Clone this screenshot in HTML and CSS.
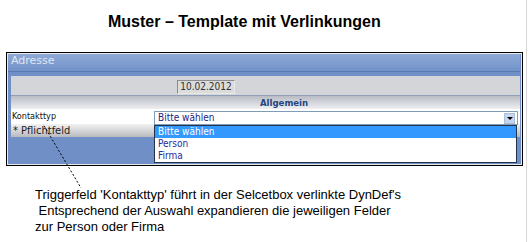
FILE: index.html
```html
<!DOCTYPE html>
<html lang="de">
<head>
<meta charset="utf-8">
<title>Muster – Template mit Verlinkungen</title>
<link rel="stylesheet" href="styles.css">
</head>
<body>
<div class="page">
  <h1 class="title">Muster – Template mit Verlinkungen</h1>
  <div class="panel">
    <div class="panel-inner">
      <div class="panel-head">Adresse</div>
      <div class="rows">
        <div class="row-date"><span class="datebox">10.02.2012</span></div>
        <div class="row-section">Allgemein</div>
        <div class="row-field">
          <span class="label">Kontakttyp</span>
          <div class="select">
            <span class="select-value">Bitte wählen</span>
            <span class="arrow"></span>
            <ul class="dropdown">
              <li class="selected">Bitte wählen</li>
              <li>Person</li>
              <li>Firma</li>
            </ul>
          </div>
        </div>
        <div class="row-required">* Pflichtfeld</div>
      </div>
    </div>
  </div>
  <p class="note">Triggerfeld 'Kontakttyp' führt in der Selcetbox verlinkte DynDef's<br>&nbsp;Entsprechend der Auswahl expandieren die jeweiligen Felder<br>zur Person oder Firma</p>
  <svg class="pointer" width="529" height="242" viewBox="0 0 529 242">
    <line x1="40" y1="119" x2="81" y2="188" stroke="#000" stroke-width="1" stroke-dasharray="2 2"/>
  </svg>
</div>
</body>
</html>
```
FILE: styles.css
```css
html, body {
  margin: 0;
  padding: 0;
  background: #fff;
}
.page {
  position: relative;
  width: 526px;
  height: 242px;
  border-right: 1px solid #d6d6d6;
  overflow: hidden;
  font-family: "Liberation Sans", Arial, sans-serif;
}
.title {
  margin: 12px 0 0 0;
  padding-left: 108px;
  font-size: 16px;
  line-height: 19px;
  font-weight: bold;
  color: #000;
}
.panel {
  margin: 21px 0 0 6px;
  width: 517px;
  box-sizing: border-box;
  border: 1px solid #000;
  padding: 1px;
  background: #e9e9e9;
}
.panel-inner {
  height: 110px;
  background: #6f8fc6;
  padding-right: 1px;
}
.panel-head {
  height: 17px;
  border-bottom: 1px solid #587ab2;
  background: linear-gradient(#8fa9d6, #7192c9);
  color: #dfe6f2;
  font-family: "DejaVu Sans", Verdana, sans-serif;
  font-size: 11px;
  line-height: 14px;
  padding-left: 3px;
}
.rows {
  margin: 4px 0 0 3px;
}
.row-date {
  height: 19px;
  border-bottom: 1px solid #8f9fb8;
  background: #d3d5d9;
  padding-left: 166px;
  box-sizing: content-box;
}
.datebox {
  display: inline-block;
  margin-top: 4px;
  width: 58px;
  height: 14px;
  box-sizing: border-box;
  border: 1px solid #8c8c8c;
  border-right-color: #e8e8e8;
  border-bottom-color: #e8e8e8;
  background: #dcdcdc;
  color: #333;
  font-family: "DejaVu Sans Condensed", "DejaVu Sans", sans-serif;
  font-size: 10px;
  line-height: 12px;
  text-align: center;
}
.row-section {
  height: 13px;
  background: linear-gradient(#b9bcc4, #eeeff2);
  padding-left: 249px;
  color: #24457f;
  font-family: "DejaVu Sans Condensed", "DejaVu Sans", sans-serif;
  font-weight: bold;
  font-size: 9.5px;
  line-height: 14px;
}
.row-field {
  position: relative;
  z-index: 2;
  display: flex;
  align-items: flex-start;
  height: 15px;
  background: #fff;
}
.label {
  width: 142px;
  padding-left: 1px;
  color: #111;
  font-family: "DejaVu Sans Condensed", "DejaVu Sans", sans-serif;
  font-size: 9px;
  line-height: 14px;
}
.select {
  position: relative;
  margin-top: 2px;
  width: 364px;
  height: 14px;
  box-sizing: border-box;
  border: 1px solid #7f9db9;
  background: #fff;
  display: flex;
  align-items: center;
  justify-content: space-between;
  padding-left: 3px;
  padding-right: 2px;
  color: #232080;
  font-family: "DejaVu Sans Condensed", "DejaVu Sans", sans-serif;
  font-size: 10px;
  line-height: 12px;
}
.arrow {
  position: relative;
  width: 11px;
  height: 11px;
  box-sizing: border-box;
  border: 1px solid #a9bfd9;
  background: #c5d7ee;
}
.arrow::after {
  content: "";
  position: absolute;
  left: 2px;
  top: 3px;
  border-left: 3px solid transparent;
  border-right: 3px solid transparent;
  border-top: 3px solid #000;
}
.dropdown {
  position: absolute;
  left: -1px;
  top: 13px;
  width: 363px;
  margin: 0;
  padding: 0;
  list-style: none;
  box-sizing: border-box;
  border: 1px solid #26334d;
  background: #fff;
}
.dropdown li {
  height: 12px;
  padding-left: 3px;
  line-height: 12px;
  color: #2a2a9a;
}
.dropdown li.selected {
  background: #3399ff;
  color: #fff;
}
.row-required {
  height: 13px;
  background: linear-gradient(#f2f2f2, #b9babe);
  padding-left: 2px;
  color: #222;
  font-family: "DejaVu Sans Condensed", "DejaVu Sans", sans-serif;
  font-size: 11px;
  line-height: 13px;
}
.note {
  margin: 21px 0 0 35px;
  font-size: 13px;
  line-height: 16px;
  color: #000;
}
.pointer {
  position: absolute;
  left: 0;
  top: 0;
  pointer-events: none;
}
```
